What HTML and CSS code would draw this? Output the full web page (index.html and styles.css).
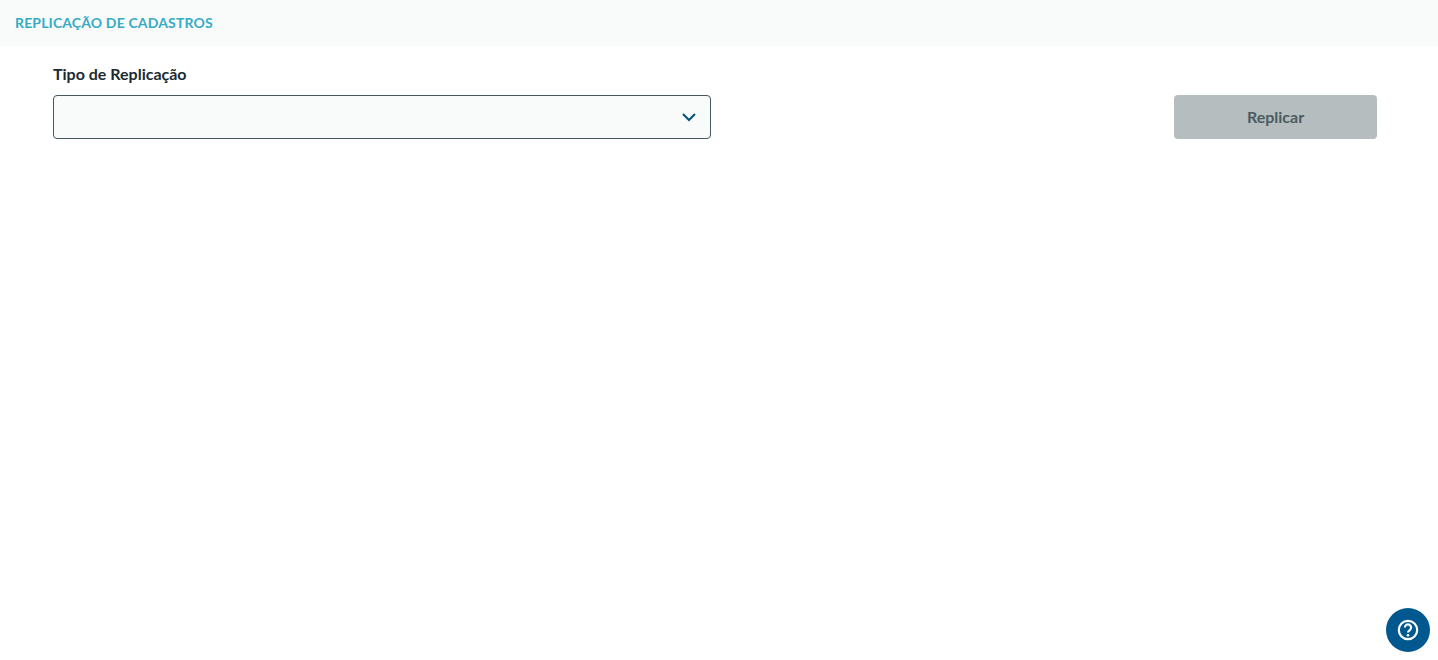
FILE: index.html
```html
<!DOCTYPE html>
<html lang="pt-BR">
<head>
    <meta charset="UTF-8">
    <meta name="viewport" content="width=device-width, initial-scale=1.0">
    <title>Replicação de Cadastros</title>
    <link rel="stylesheet" href="styles.css">
</head>
<body>
    <header class="page-header">
        <h1>REPLICAÇÃO DE CADASTROS</h1>
    </header>

    <main class="form-row">
        <div class="field">
            <label class="field-label" for="tipo">Tipo de Replicação</label>
            <div class="select-box" id="tipo">
                <svg class="chevron" width="16" height="10" viewBox="0 0 16 10" aria-hidden="true">
                    <path d="M2 2l6 6 6-6" fill="none" stroke="#00527c" stroke-width="2"/>
                </svg>
            </div>
        </div>
        <button class="btn-replicar" disabled><span class="btn-text">Replicar</span></button>
    </main>

    <button class="help-btn" aria-label="Ajuda">
        <svg width="24" height="24" viewBox="0 0 24 24" aria-hidden="true">
            <circle cx="12" cy="12" r="9.2" fill="none" stroke="#fff" stroke-width="2.2"/>
            <path d="M8.9 9.6a3.1 3.1 0 1 1 4.9 2.5c-1.1.8-1.8 1.3-1.8 2.5" fill="none" stroke="#fff" stroke-width="2.2"/>
            <circle cx="12" cy="17.2" r="1.3" fill="#fff"/>
        </svg>
    </button>
</body>
</html>
```

FILE: styles.css
```css
body {
    margin: 0;
    font-family: "Lato", "Open Sans", sans-serif;
    background: #fff;
}
.page-header {
    height: 44px;
    padding: 0 15px 2px;
    display: flex;
    align-items: center;
    background: #f9fbfa;
}
.page-header h1 {
    margin: 0;
    font-size: 14px;
    font-weight: 700;
    letter-spacing: 0.15px;
    color: #36abc4;
}
.form-row {
    display: flex;
    justify-content: space-between;
    align-items: flex-end;
    padding: 18px 61px 0 53px;
}
.field-label {
    display: block;
    height: 20px;
    margin-bottom: 11px;
    font-size: 16px;
    line-height: 20px;
    font-weight: 700;
    color: #1d2a30;
}
.select-box {
    box-sizing: border-box;
    width: 658px;
    height: 44px;
    padding-right: 13px;
    display: flex;
    align-items: center;
    justify-content: flex-end;
    background: #f9fbfa;
    border: 1px solid #45565f;
    border-radius: 4px;
}
.btn-replicar {
    width: 203px;
    height: 44px;
    padding: 0 0 2px;
    border: none;
    border-radius: 4px;
    background: #b6bdbf;
    color: #4a5c62;
    font-family: inherit;
    font-size: 16px;
    font-weight: 700;
}
.help-btn {
    position: fixed;
    right: 8px;
    bottom: 8px;
    width: 44px;
    height: 44px;
    padding: 0;
    display: flex;
    align-items: center;
    justify-content: center;
    border: none;
    border-radius: 50%;
    background: #00588f;
}
```
